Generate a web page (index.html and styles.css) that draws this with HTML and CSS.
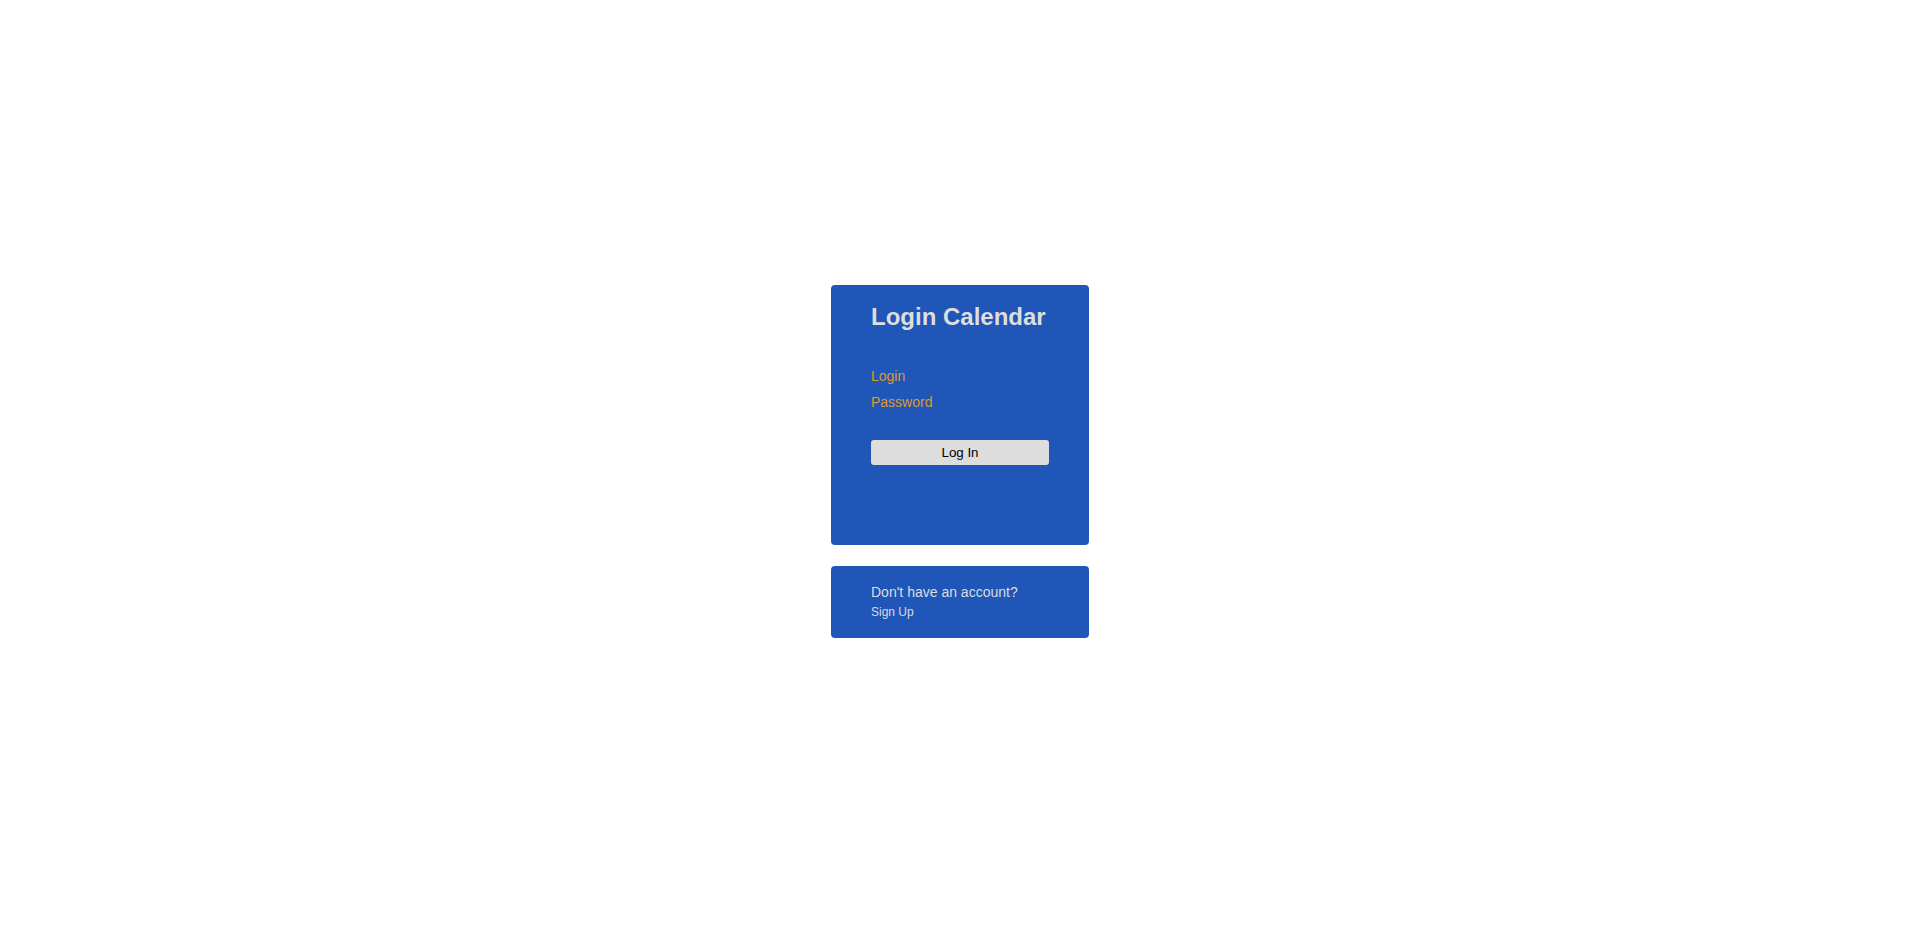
FILE: index.html
```html
<!DOCTYPE html>
<html lang="en">
<head>
<meta charset="utf-8">
<title>Login Calendar</title>
<link rel="stylesheet" href="styles.css">
</head>
<body>
<main class="page">
  <section class="card login-card">
    <h2 class="title">Login Calendar</h2>
    <form class="form">
      <label class="field-label">Login</label>
      <label class="field-label">Password</label>
      <button type="button" class="btn">Log In</button>
    </form>
  </section>
  <section class="card signup-card">
    <p class="question">Don't have an account?</p>
    <a class="signup-link">Sign Up</a>
  </section>
</main>
</body>
</html>
```

FILE: styles.css
```css
html, body {
  margin: 0;
  padding: 0;
  background: #ffffff;
}
body {
  font-family: "Liberation Sans", Arial, sans-serif;
}
.page {
  min-height: 925px;
  display: flex;
  flex-direction: column;
  align-items: center;
  justify-content: center;
  gap: 21px;
  box-sizing: border-box;
  padding-bottom: 2px;
}
.card {
  width: 258px;
  box-sizing: border-box;
  background: #1f56b8;
  border-radius: 4px;
  padding: 0 40px;
  color: #dcdcdc;
}
.login-card {
  height: 260px;
  padding-top: 18px;
}
.title {
  margin: 0;
  font-size: 24px;
  font-weight: bold;
  line-height: 28px;
  color: #dedede;
}
.form {
  display: flex;
  flex-direction: column;
  align-items: flex-start;
  margin-top: 37px;
}
.field-label {
  display: block;
  font-size: 14px;
  line-height: 16px;
  color: #dc9a2c;
  margin-bottom: 10px;
}
.btn {
  margin-top: 20px;
  width: 178px;
  height: 25px;
  border: none;
  border-radius: 3px;
  background: #dddddd;
  color: #000000;
  font-family: "Liberation Sans", Arial, sans-serif;
  font-size: 13.33px;
  padding: 0;
}
.signup-card {
  height: 72px;
  padding-top: 18px;
}
.question {
  margin: 0;
  font-size: 14px;
  line-height: 16px;
  color: #dcdcdc;
}
.signup-link {
  display: block;
  margin-top: 5px;
  font-size: 12px;
  line-height: 14px;
  color: #dcdcdc;
}
```
